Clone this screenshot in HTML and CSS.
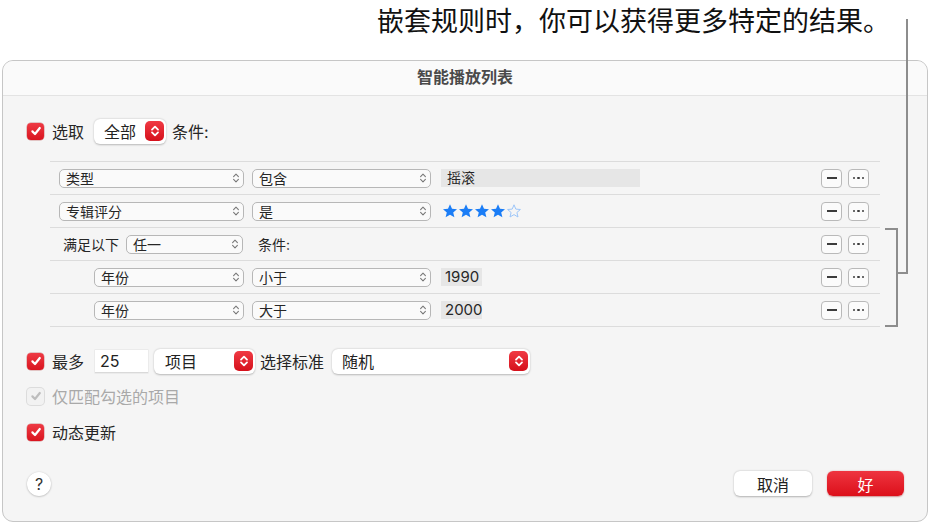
FILE: index.html
```html
<!DOCTYPE html>
<html lang="zh-CN">
<head>
  <meta charset="UTF-8" />
  <meta name="viewport" content="width=device-width, initial-scale=1.0"/>
  <title>智能播放列表</title>
  <link rel="stylesheet" href="styles.css">
</head>
<body>
  <!-- Callout text and its leader line -->
  <p class="callout">嵌套规则时，你可以获得更多特定的结果。</p>
  <div class="leader"></div>
  <div class="leader-tick"></div>
  <div class="bracket"></div>

  <div class="dialog">
    <div class="titlebar">智能播放列表</div>

    <div class="content">
      <!-- Match row -->
      <div class="line first-line">
        <span class="check"><svg viewBox="0 0 14 14"><path d="M3.4 7.4 6 10l4.8-6"/></svg></span>
        <span class="label">选取</span>
        <div class="popup popup-all">
          <span>全部</span>
          <span class="stepper"><svg viewBox="0 0 10 14"><path d="M2 5.6 5 2.6l3 3M2 8.4l3 3 3-3"/></svg></span>
        </div>
        <span class="label">条件:</span>
      </div>

      <!-- Rules -->
      <div class="rules">
        <div class="rule">
          <div class="col1">
            <div class="pop pop-wide">类型<svg class="chev" viewBox="0 0 8 12"><path d="M1.6 4.6 4 2.2l2.4 2.4M1.6 7.4 4 9.8l2.4-2.4"/></svg></div>
          </div>
          <div class="pop pop-mid">包含<svg class="chev" viewBox="0 0 8 12"><path d="M1.6 4.6 4 2.2l2.4 2.4M1.6 7.4 4 9.8l2.4-2.4"/></svg></div>
          <div class="field field-long">摇滚</div>
          <div class="row-btns">
            <span class="mini-btn"><span class="minus"></span></span>
            <span class="mini-btn"><span class="dots"><i></i><i></i><i></i></span></span>
          </div>
        </div>

        <div class="rule">
          <div class="col1">
            <div class="pop pop-wide">专辑评分<svg class="chev" viewBox="0 0 8 12"><path d="M1.6 4.6 4 2.2l2.4 2.4M1.6 7.4 4 9.8l2.4-2.4"/></svg></div>
          </div>
          <div class="pop pop-mid">是<svg class="chev" viewBox="0 0 8 12"><path d="M1.6 4.6 4 2.2l2.4 2.4M1.6 7.4 4 9.8l2.4-2.4"/></svg></div>
          <div class="stars">
            <svg viewBox="0 0 16 16"><path class="full" d="M8 1.2l2 4.6 5 .4-3.8 3.2 1.2 4.9L8 11.7l-4.4 2.6 1.2-4.9L1 6.2l5-.4z"/></svg>
            <svg viewBox="0 0 16 16"><path class="full" d="M8 1.2l2 4.6 5 .4-3.8 3.2 1.2 4.9L8 11.7l-4.4 2.6 1.2-4.9L1 6.2l5-.4z"/></svg>
            <svg viewBox="0 0 16 16"><path class="full" d="M8 1.2l2 4.6 5 .4-3.8 3.2 1.2 4.9L8 11.7l-4.4 2.6 1.2-4.9L1 6.2l5-.4z"/></svg>
            <svg viewBox="0 0 16 16"><path class="full" d="M8 1.2l2 4.6 5 .4-3.8 3.2 1.2 4.9L8 11.7l-4.4 2.6 1.2-4.9L1 6.2l5-.4z"/></svg>
            <svg viewBox="0 0 16 16"><path class="empty" d="M8 1.8l1.8 4.3 4.6.4-3.5 3 1.1 4.5L8 11.6 4 14l1.1-4.5-3.5-3 4.6-.4z"/></svg>
          </div>
          <div class="row-btns">
            <span class="mini-btn"><span class="minus"></span></span>
            <span class="mini-btn"><span class="dots"><i></i><i></i><i></i></span></span>
          </div>
        </div>

        <div class="rule">
          <div class="col1">
            <span class="rule-label">满足以下</span>
            <div class="pop pop-any">任一<svg class="chev" viewBox="0 0 8 12"><path d="M1.6 4.6 4 2.2l2.4 2.4M1.6 7.4 4 9.8l2.4-2.4"/></svg></div>
          </div>
          <span class="rule-text">条件:</span>
          <div class="row-btns">
            <span class="mini-btn"><span class="minus"></span></span>
            <span class="mini-btn"><span class="dots"><i></i><i></i><i></i></span></span>
          </div>
        </div>

        <div class="rule">
          <div class="col1 nested">
            <div class="pop pop-nested">年份<svg class="chev" viewBox="0 0 8 12"><path d="M1.6 4.6 4 2.2l2.4 2.4M1.6 7.4 4 9.8l2.4-2.4"/></svg></div>
          </div>
          <div class="pop pop-mid">小于<svg class="chev" viewBox="0 0 8 12"><path d="M1.6 4.6 4 2.2l2.4 2.4M1.6 7.4 4 9.8l2.4-2.4"/></svg></div>
          <div class="field field-short">1990</div>
          <div class="row-btns">
            <span class="mini-btn"><span class="minus"></span></span>
            <span class="mini-btn"><span class="dots"><i></i><i></i><i></i></span></span>
          </div>
        </div>

        <div class="rule">
          <div class="col1 nested">
            <div class="pop pop-nested">年份<svg class="chev" viewBox="0 0 8 12"><path d="M1.6 4.6 4 2.2l2.4 2.4M1.6 7.4 4 9.8l2.4-2.4"/></svg></div>
          </div>
          <div class="pop pop-mid">大于<svg class="chev" viewBox="0 0 8 12"><path d="M1.6 4.6 4 2.2l2.4 2.4M1.6 7.4 4 9.8l2.4-2.4"/></svg></div>
          <div class="field field-short">2000</div>
          <div class="row-btns">
            <span class="mini-btn"><span class="minus"></span></span>
            <span class="mini-btn"><span class="dots"><i></i><i></i><i></i></span></span>
          </div>
        </div>
      </div>

      <!-- Limit row -->
      <div class="line limit-line">
        <span class="check"><svg viewBox="0 0 14 14"><path d="M3.4 7.4 6 10l4.8-6"/></svg></span>
        <span class="label">最多</span>
        <div class="text-input">25</div>
        <div class="popup popup-items">
          <span>项目</span>
          <span class="stepper"><svg viewBox="0 0 10 14"><path d="M2 5.6 5 2.6l3 3M2 8.4l3 3 3-3"/></svg></span>
        </div>
        <span class="label">选择标准</span>
        <div class="popup popup-random">
          <span>随机</span>
          <span class="stepper"><svg viewBox="0 0 10 14"><path d="M2 5.6 5 2.6l3 3M2 8.4l3 3 3-3"/></svg></span>
        </div>
      </div>

      <div class="line option-line first-option">
        <span class="check disabled"><svg viewBox="0 0 14 14"><path d="M3.4 7.4 6 10l4.8-6"/></svg></span>
        <span class="label muted">仅匹配勾选的项目</span>
      </div>

      <div class="line option-line">
        <span class="check"><svg viewBox="0 0 14 14"><path d="M3.4 7.4 6 10l4.8-6"/></svg></span>
        <span class="label">动态更新</span>
      </div>

      <!-- Footer buttons -->
      <div class="footer">
        <span class="help">?</span>
        <div class="actions">
          <button class="btn">取消</button>
          <button class="btn btn-primary">好</button>
        </div>
      </div>
    </div>
  </div>
</body>
</html>
```

FILE: styles.css
```css
body {
  margin: 0;
  background: white;
  font-family: 'Inter', 'Noto Sans CJK SC', sans-serif;
  color: #222;
  position: relative;
  width: 931px;
  height: 524px;
  overflow: hidden;
}

.callout {
  margin: 0;
  height: 60px;
  box-sizing: border-box;
  padding: 5px 41px 0 0;
  text-align: right;
  font-family: 'Noto Sans CJK SC', sans-serif;
  font-size: 27px;
  line-height: 30px;
  color: #111;
}

/* leader line + bracket */
.leader {
  position: absolute;
  left: 906px;
  top: 19px;
  width: 2px;
  height: 255px;
  background: #8d8d8d;
  z-index: 5;
}

.leader-tick {
  position: absolute;
  left: 897px;
  top: 272px;
  width: 10px;
  height: 2px;
  background: #8d8d8d;
  z-index: 5;
}

.bracket {
  position: absolute;
  left: 885px;
  top: 228px;
  width: 11px;
  height: 95px;
  border: 2px solid #8d8d8d;
  border-left: none;
  z-index: 5;
}

/* dialog */
.dialog {
  margin-left: 2px;
  width: 926px;
  height: 462px;
  box-sizing: border-box;
  border: 1px solid #c6c6c6;
  border-radius: 11px;
  background: #f5f5f5;
  overflow: hidden;
}

.titlebar {
  height: 34px;
  border-bottom: 1px solid #e3e3e3;
  background: #fafafa;
  text-align: center;
  line-height: 33px;
  font-size: 16px;
  font-weight: 600;
  color: #4a4a4a;
}

.content {
  padding-left: 24px;
  padding-right: 23px;
}

.line {
  display: flex;
  align-items: center;
  height: 24px;
}

.first-line {
  margin-top: 23px;
}

.limit-line {
  margin-top: 22px;
}

.option-line {
  margin-top: 12px;
}

.option-line.first-option {
  margin-top: 11px;
}

.label {
  font-size: 16px;
  color: #262626;
  margin-left: 8px;
  white-space: nowrap;
}

.label.muted {
  color: #a9a9a9;
}

/* checkboxes */
.check {
  width: 17px;
  height: 17px;
  border-radius: 4px;
  background: linear-gradient(#ee3a44, #d9141f);
  box-shadow: 0 0 0 0.5px rgba(150, 0, 0, 0.4);
  display: flex;
  align-items: center;
  justify-content: center;
  flex-shrink: 0;
}

.check svg {
  width: 14px;
  height: 14px;
  fill: none;
  stroke: white;
  stroke-width: 2.2;
  stroke-linecap: round;
  stroke-linejoin: round;
}

.check.disabled {
  background: #f2f2f2;
  box-shadow: 0 0 0 1px #dcdcdc;
}

.check.disabled svg {
  stroke: #bdbdbd;
}

/* big popups with red stepper */
.popup {
  height: 25px;
  box-sizing: border-box;
  background: white;
  border-radius: 6px;
  box-shadow: 0 0.5px 2px rgba(0, 0, 0, 0.25);
  display: flex;
  align-items: center;
  justify-content: space-between;
  padding: 0 2px 0 10px;
  font-size: 16px;
  color: #222;
  margin-left: 8px;
}

.stepper {
  width: 19px;
  height: 20px;
  border-radius: 5px;
  background: linear-gradient(#f03a44, #d5101b);
  display: flex;
  align-items: center;
  justify-content: center;
}

.stepper svg {
  width: 10px;
  height: 14px;
  fill: none;
  stroke: white;
  stroke-width: 1.8;
  stroke-linecap: round;
  stroke-linejoin: round;
}

.popup-all {
  width: 72px;
  margin-left: 10px;
  margin-right: -2px;
}

.popup-items {
  width: 101px;
  margin-left: 6px;
  padding-left: 11px;
  margin-right: -3px;
}

.popup-random {
  width: 198px;
  margin-left: 8px;
  padding-left: 10px;
}

.text-input {
  width: 53px;
  height: 23px;
  box-sizing: border-box;
  margin-left: 11px;
  background: white;
  border-bottom: 1px solid #d9d9d9;
  box-shadow: 0 0 0 0.5px #e2e2e2;
  font-size: 16px;
  line-height: 23px;
  padding-left: 5px;
  color: #222;
}

/* rules table */
.rules {
  margin: 18px 0 0 23px;
  width: 830px;
  border-top: 1px solid #dcdcdc;
}

.rule {
  display: flex;
  align-items: center;
  height: 32px;
  border-bottom: 1px solid #dcdcdc;
  padding: 0 11px 0 9px;
  font-size: 14px;
}

.col1 {
  width: 185px;
  display: flex;
  align-items: center;
  margin-right: 8px;
  flex-shrink: 0;
}

.col1.nested {
  justify-content: flex-end;
}

.rule-label {
  margin-left: 4px;
  margin-right: 7px;
  color: #262626;
}

.rule-text {
  margin-left: 6px;
  color: #262626;
}

.pop {
  height: 19px;
  box-sizing: border-box;
  border: 1px solid #b7b7b7;
  border-radius: 5px;
  background: #fafafa;
  display: flex;
  align-items: center;
  justify-content: space-between;
  padding: 0 3px 0 6px;
  color: #262626;
  line-height: 17px;
  flex-shrink: 0;
}

.pop-wide { width: 185px; }
.pop-mid { width: 179px; }
.pop-any { width: 117px; }
.pop-nested { width: 150px; }

.chev {
  width: 8px;
  height: 12px;
  fill: none;
  stroke: #787878;
  stroke-width: 1.1;
  stroke-linecap: round;
  stroke-linejoin: round;
}

.field {
  height: 18px;
  margin-left: 10px;
  background: #e6e6e6;
  line-height: 18px;
  padding-left: 6px;
  box-sizing: border-box;
  color: #262626;
}

.field-long { width: 199px; }
.field-short { width: 41px; padding-left: 4px; font-size: 15px; }

.stars {
  display: flex;
  margin-left: 11px;
}

.stars svg {
  width: 16px;
  height: 16px;
}

.stars .full {
  fill: #1b7df6;
}

.stars .empty {
  fill: none;
  stroke: #9cc5f8;
  stroke-width: 1;
}

.row-btns {
  margin-left: auto;
  display: flex;
  gap: 6px;
}

.mini-btn {
  width: 21px;
  height: 19px;
  box-sizing: border-box;
  border: 1px solid #b9b9b9;
  border-radius: 4px;
  background: #fbfbfb;
  display: flex;
  align-items: center;
  justify-content: center;
}

.minus {
  width: 10px;
  height: 1.5px;
  background: #3c3c3c;
}

.dots {
  display: flex;
  gap: 2px;
}

.dots i {
  width: 2.5px;
  height: 2.5px;
  border-radius: 50%;
  background: #3c3c3c;
}

/* footer */
.footer {
  display: flex;
  align-items: center;
  justify-content: space-between;
  margin-top: 27px;
  height: 25px;
}

.help {
  width: 24px;
  height: 24px;
  border-radius: 50%;
  background: white;
  box-shadow: 0 0.5px 2px rgba(0, 0, 0, 0.3);
  display: flex;
  align-items: center;
  justify-content: center;
  font-size: 16px;
  color: #333;
}

.actions {
  display: flex;
  gap: 15px;
}

.btn {
  width: 78px;
  height: 25px;
  border: none;
  border-radius: 6px;
  background: white;
  box-shadow: 0 0.5px 2px rgba(0, 0, 0, 0.28);
  font-family: 'Noto Sans CJK SC', sans-serif;
  font-size: 16px;
  color: #222;
  padding: 0;
}

.btn-primary {
  width: 77px;
  background: linear-gradient(#ee3540, #dc0f1a);
  color: white;
  box-shadow: 0 0.5px 1.5px rgba(150, 0, 0, 0.4);
}
```
